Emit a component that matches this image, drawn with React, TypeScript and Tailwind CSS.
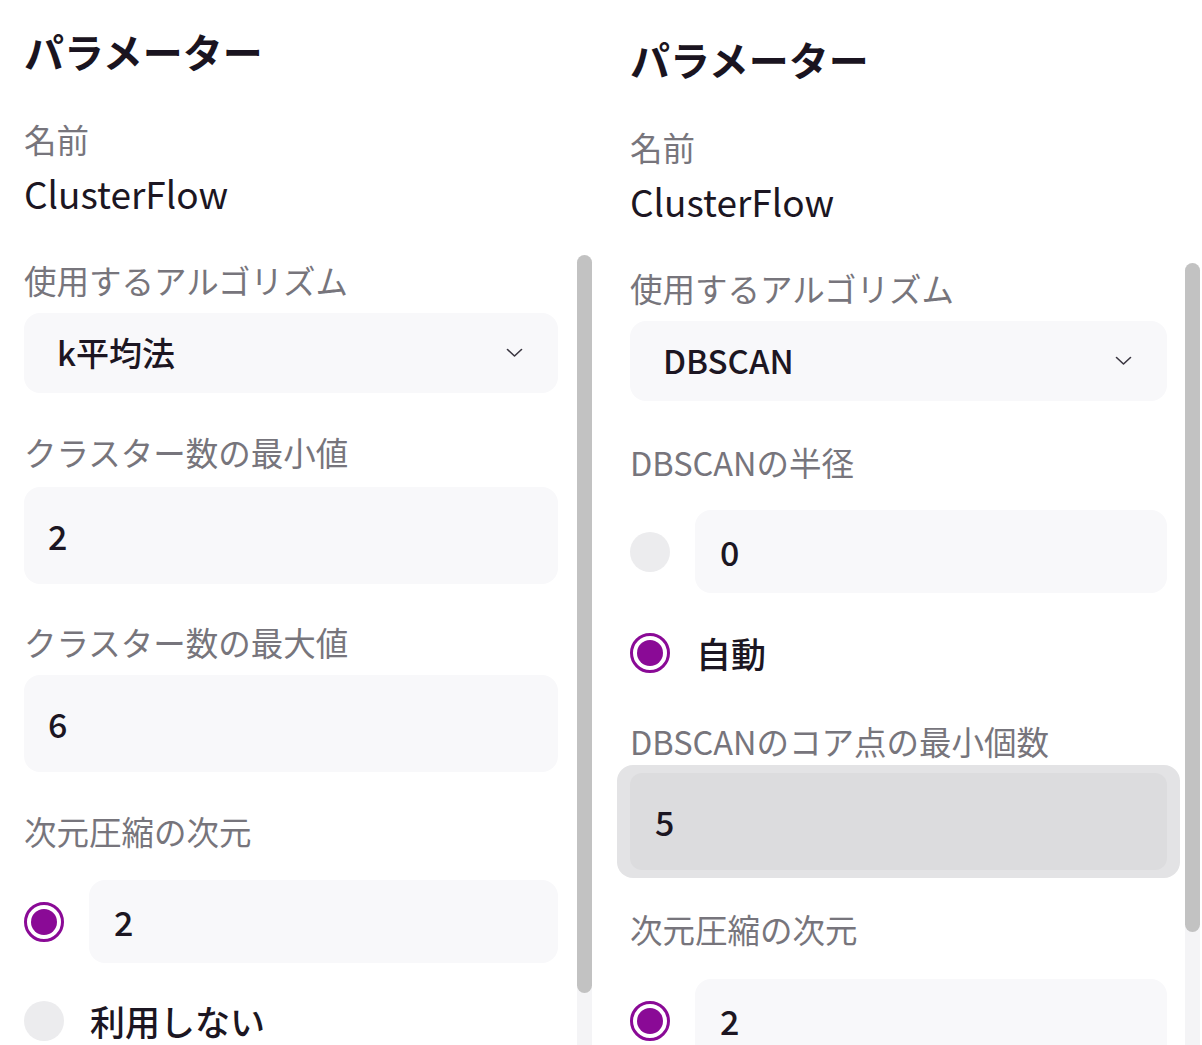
import React from "react";

function Label({ children, className = "" }: { children: React.ReactNode; className?: string }) {
  return <div className={`text-[32.5px] leading-[40px] text-[#77757c] ${className}`}>{children}</div>;
}

function Chevron() {
  return (
    <svg width="17" height="10" viewBox="0 0 17 10" fill="none">
      <polyline points="1.5,1.5 8.5,8 15.5,1.5" stroke="#3a3640" strokeWidth="1.6" strokeLinecap="round" strokeLinejoin="round" />
    </svg>
  );
}

function Select({ value, className = "" }: { value: string; className?: string }) {
  return (
    <div className={`h-[80px] rounded-2xl bg-[#f8f8fa] flex items-center justify-between pl-[33px] pr-[35px] ${className}`}>
      <span className="text-[33px] font-medium text-[#1c1622]">{value}</span>
      <Chevron />
    </div>
  );
}

function Field({ value, className = "" }: { value: string; className?: string }) {
  return (
    <div className={`h-[97px] rounded-2xl bg-[#f8f8fa] flex items-center pl-[24px] text-[34px] font-medium text-[#1c1622] ${className}`}>
      {value}
    </div>
  );
}

function Radio({ checked }: { checked: boolean }) {
  if (!checked) return <div className="w-[40px] h-[40px] shrink-0 rounded-full bg-[#ececee]" />;
  return (
    <div className="w-[40px] h-[40px] shrink-0 rounded-full border-[3px] border-[#8a0a96] bg-white flex items-center justify-center">
      <div className="w-[26px] h-[26px] rounded-full bg-[#8a0a96]" />
    </div>
  );
}

function RadioField({ checked, value, className = "" }: { checked: boolean; value: string; className?: string }) {
  return (
    <div className={`flex items-center gap-[25px] ${className}`}>
      <Radio checked={checked} />
      <div className="flex-1 h-[83px] rounded-2xl bg-[#f8f8fa] flex items-center pl-[25px] text-[34px] font-medium text-[#1c1622]">
        {value}
      </div>
    </div>
  );
}

function RadioText({ checked, text, className = "" }: { checked: boolean; text: string; className?: string }) {
  return (
    <div className={`flex items-center gap-[26px] h-[40px] ${className}`}>
      <Radio checked={checked} />
      <span className="text-[35px] font-medium text-[#1c1622] leading-[40px]">{text}</span>
    </div>
  );
}

function Header() {
  return (
    <>
      <h2 className="text-[40px] leading-[48px] font-bold text-[#1a1420]">パラメーター</h2>
      <Label className="mt-[44px]">名前</Label>
      <div className="mt-[12px] text-[37px] leading-[44px] text-[#1c1622]">ClusterFlow</div>
      <Label className="mt-[45px]">使用するアルゴリズム</Label>
    </>
  );
}

function Scrollbar({ top, height, right }: { top: number; height: number; right: string }) {
  return (
    <div className={`absolute top-0 bottom-0 w-[15px] ${right}`}>
      <div className="absolute left-0 right-0 bottom-0 bg-[#f4f4f6]" style={{ top: top + height - 10 }} />
      <div className="absolute left-0 right-0 rounded-full bg-[#c2c2c2]" style={{ top, height }} />
    </div>
  );
}

function KMeansPanel() {
  return (
    <div className="relative w-[606px] shrink-0 pl-[24px] pr-[48px] pt-[27px] flex flex-col *:shrink-0">
      <Header />
      <Select value="k平均法" className="mt-[13px]" />
      <Label className="mt-[39px]">クラスター数の最小値</Label>
      <Field value="2" className="mt-[15px]" />
      <Label className="mt-[38px]">クラスター数の最大値</Label>
      <Field value="6" className="mt-[13px]" />
      <Label className="mt-[39px]">次元圧縮の次元</Label>
      <RadioField checked value="2" className="mt-[29px]" />
      <RadioText checked={false} text="利用しない" className="mt-[38px]" />
      <Scrollbar top={255} height={738} right="right-[14px]" />
    </div>
  );
}

function DbscanPanel() {
  return (
    <div className="relative w-[596px] shrink-0 pl-[24px] pr-[35px] pt-[35px] flex flex-col *:shrink-0">
      <Header />
      <Select value="DBSCAN" className="mt-[13px]" />
      <Label className="mt-[41px]">DBSCANの半径</Label>
      <RadioField checked={false} value="0" className="mt-[28px]" />
      <RadioText checked text="自動" className="mt-[40px]" />
      <Label className="mt-[48px]">DBSCANのコア点の最小個数</Label>
      <div className="mt-[4px] -mx-[13px] px-[13px] py-[8px] rounded-2xl bg-[#e3e3e5]">
        <div className="h-[97px] rounded-xl bg-[#dcdcde] flex items-center pl-[25px] text-[34px] font-medium text-[#1c1622]">5</div>
      </div>
      <Label className="mt-[31px]">次元圧縮の次元</Label>
      <RadioField checked value="2" className="mt-[30px]" />
      <Scrollbar top={263} height={669} right="right-[2px]" />
    </div>
  );
}

export default function App() {
  return (
    <div className="w-[1202px] h-[1045px] overflow-hidden bg-white flex font-['Noto_Sans_CJK_JP',sans-serif]">
      <KMeansPanel />
      <DbscanPanel />
    </div>
  );
}
